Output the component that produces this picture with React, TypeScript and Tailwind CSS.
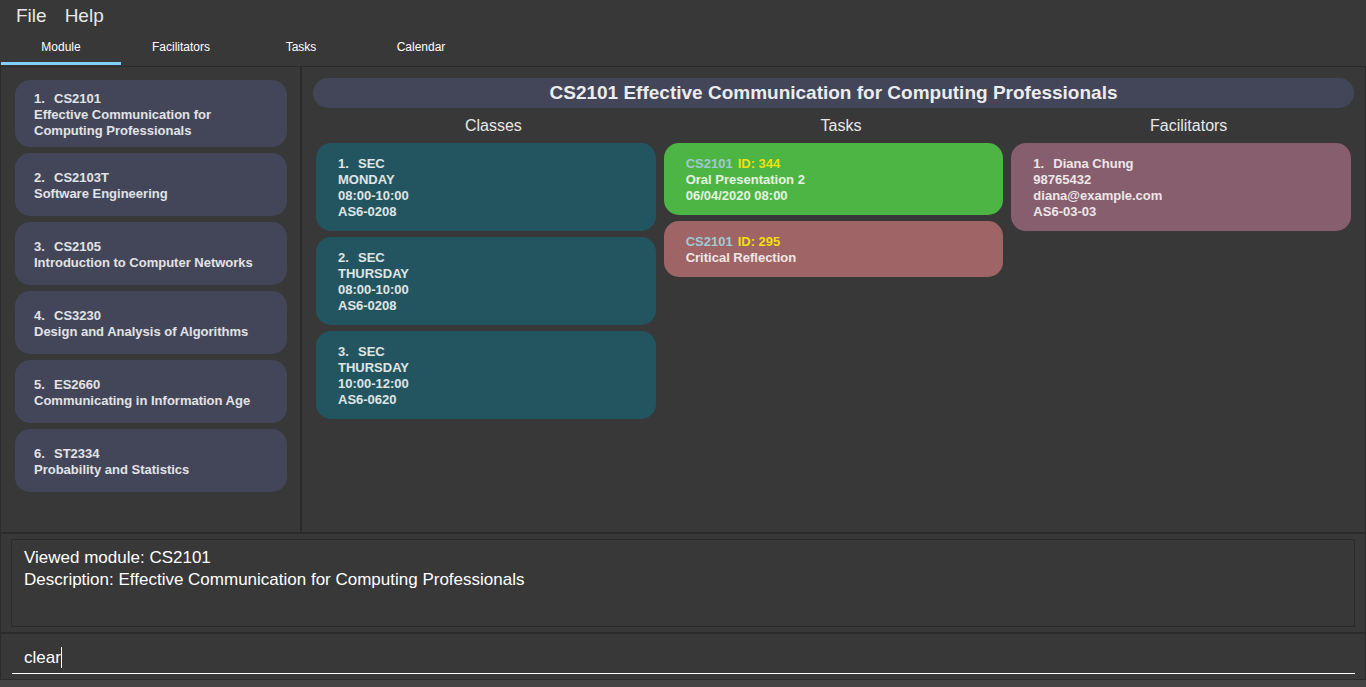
import { useState, type ReactNode } from "react";

const tabs = ["Module", "Facilitators", "Tasks", "Calendar"];

const modules = [
  { code: "CS2101", title: "Effective Communication for Computing Professionals" },
  { code: "CS2103T", title: "Software Engineering" },
  { code: "CS2105", title: "Introduction to Computer Networks" },
  { code: "CS3230", title: "Design and Analysis of Algorithms" },
  { code: "ES2660", title: "Communicating in Information Age" },
  { code: "ST2334", title: "Probability and Statistics" },
];

const classes = [
  { type: "SEC", day: "MONDAY", time: "08:00-10:00", venue: "AS6-0208" },
  { type: "SEC", day: "THURSDAY", time: "08:00-10:00", venue: "AS6-0208" },
  { type: "SEC", day: "THURSDAY", time: "10:00-12:00", venue: "AS6-0620" },
];

const tasks = [
  { module: "CS2101", id: 344, title: "Oral Presentation 2", due: "06/04/2020 08:00", tone: "bg-[#4cb543]" },
  { module: "CS2101", id: 295, title: "Critical Reflection", due: "", tone: "bg-[#9f6465]" },
];

const facilitators = [
  { name: "Diana Chung", phone: "98765432", email: "diana@example.com", office: "AS6-03-03" },
];

function Column({ heading, children }: { heading: string; children: ReactNode }) {
  return (
    <section className="min-w-0 flex-1">
      <h2 className="py-[6px] pl-[15px] text-center text-[16px] leading-[23px] text-[#e8e8e8]">{heading}</h2>
      <ul className="flex flex-col gap-[6px]">{children}</ul>
    </section>
  );
}

function Card({ tone, children }: { tone: string; children: ReactNode }) {
  return (
    <li className={`rounded-[15px] px-[22px] pt-[13px] pb-[11px] text-[13px] leading-[16px] font-bold text-white/85 ${tone}`}>
      {children}
    </li>
  );
}

function Numbered({ index, children }: { index: number; children: ReactNode }) {
  return (
    <p className="flex">
      <span className="w-[20px]">{index}.</span>
      <span>{children}</span>
    </p>
  );
}

export default function App() {
  const [command, setCommand] = useState("clear");
  const [active, setActive] = useState("Module");

  return (
    <div className="flex min-h-screen flex-col bg-[#383838] font-['Liberation_Sans',Arial,sans-serif] text-white">
      <nav className="flex h-[32px] items-center gap-[18px] px-[16px] text-[19px] leading-[22px] text-[#e8e8e8]">
        <button type="button">File</button>
        <button type="button">Help</button>
      </nav>

      <div role="tablist" className="flex h-[33px] px-px text-[12px] leading-[14px]">
        {tabs.map((tab) => (
          <button
            key={tab}
            type="button"
            role="tab"
            aria-selected={tab === active}
            onClick={() => setActive(tab)}
            className={`w-[120px] border-b-[3px] pb-px ${tab === active ? "border-[#7fd0fb]" : "border-transparent"}`}
          >
            {tab}
          </button>
        ))}
      </div>

      <main className="mt-px flex min-h-[467px] flex-1 border border-b-2 border-[#2b2b2b]">
        <aside className="w-[301px] shrink-0 border-r-2 border-[#2b2b2b] pt-[13px] pr-[13px] pl-[14px]">
          <ul className="flex flex-col gap-[6px]">
            {modules.map((m, i) => (
              <li
                key={m.code}
                className="flex min-h-[63px] flex-col justify-center rounded-[15px] bg-[#424658] px-[19px] pt-[11px] pb-[8px] text-[13px] leading-[16px] font-bold text-white/85"
              >
                <Numbered index={i + 1}>{m.code}</Numbered>
                <p>{m.title}</p>
              </li>
            ))}
          </ul>
        </aside>

        <div className="min-w-0 flex-1 px-[11px] pt-[11px]">
          <h1 className="rounded-full bg-[#424658] text-center text-[19px] leading-[30px] font-bold text-[#ececee]">
            CS2101 Effective Communication for Computing Professionals
          </h1>
          <div className="flex gap-[8px] px-[3px]">
            <Column heading="Classes">
              {classes.map((c, i) => (
                <Card key={i} tone="bg-[#225560]">
                  <Numbered index={i + 1}>{c.type}</Numbered>
                  <p>{c.day}</p>
                  <p>{c.time}</p>
                  <p>{c.venue}</p>
                </Card>
              ))}
            </Column>
            <Column heading="Tasks">
              {tasks.map((t) => (
                <Card key={t.id} tone={t.tone}>
                  <p className="flex gap-[5px]">
                    <span className="text-[#a3c8d4]">{t.module}</span>
                    <span className="text-[#f0e00c]">ID: {t.id}</span>
                  </p>
                  <p>{t.title}</p>
                  {t.due && <p>{t.due}</p>}
                </Card>
              ))}
            </Column>
            <Column heading="Facilitators">
              {facilitators.map((f, i) => (
                <Card key={f.email} tone="bg-[#875e6e]">
                  <Numbered index={i + 1}>{f.name}</Numbered>
                  <p>{f.phone}</p>
                  <p>{f.email}</p>
                  <p>{f.office}</p>
                </Card>
              ))}
            </Column>
          </div>
        </div>
      </main>

      <section className="border-x border-b-2 border-[#2b2b2b] px-[10px] py-[5px]">
        <output className="block min-h-[88px] border border-[#2b2b2b] px-[12px] py-[7px] text-[17px] leading-[22px]">
          <p>Viewed module: CS2101</p>
          <p>Description: Effective Communication for Computing Professionals</p>
        </output>
      </section>

      <form
        className="border-x border-b border-[#2b2b2b] pt-[8px] pr-[10px] pb-[5px] pl-[11px]"
        onSubmit={(e) => e.preventDefault()}
      >
        <div className="flex h-[32px] items-center border-b border-white px-[12px]">
          <input
            type="text"
            aria-label="Command"
            value={command}
            onChange={(e) => setCommand(e.target.value)}
            className="field-sizing-content bg-transparent text-[17px] leading-[22px] caret-transparent outline-none"
          />
          <span className="h-[21px] w-px bg-white" />
        </div>
      </form>

      <footer className="h-[7px] bg-[#444444]" />
    </div>
  );
}
